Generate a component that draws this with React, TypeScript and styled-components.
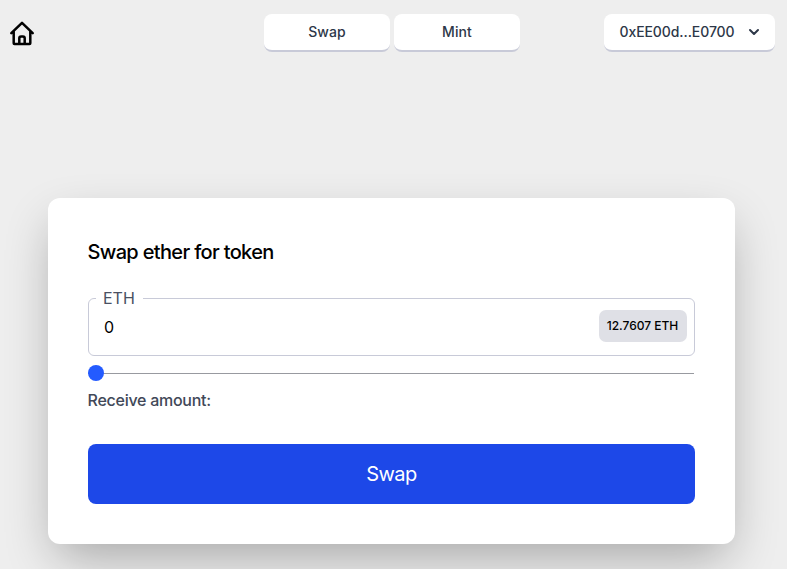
import React, { useState } from "react";
import styled, { createGlobalStyle } from "styled-components";

const GlobalStyle = createGlobalStyle`
  *, *::before, *::after { box-sizing: border-box; }
  body {
    margin: 0;
    min-height: 100vh;
    overflow: hidden;
    background: #eeeeee;
    color: #000;
    font-family: Inter, "Liberation Sans", sans-serif;
  }
  button, input { font: inherit; }
`;

const Header = styled.header`
  display: grid;
  grid-template-columns: 1fr auto 1fr;
  align-items: center;
  height: 66px;
  padding: 0 12px 0 9px;
`;

const HomeLink = styled.a`
  display: flex;
  width: 26px;
  height: 26px;
  color: #000;
`;

const Nav = styled.nav`
  display: flex;
  gap: 4px;
`;

const NavButton = styled.button<{ $width: number; $tracking?: number }>`
  display: flex;
  align-items: center;
  justify-content: center;
  gap: 13px;
  justify-self: end;
  width: ${({ $width }) => $width}px;
  height: 38px;
  padding: 0 0 1px;
  border: 0;
  border-bottom: 2px solid #c8cad8;
  border-radius: 8px;
  background: #fff;
  color: #2d3748;
  font-size: 14px;
  font-weight: 500;
  letter-spacing: ${({ $tracking = 0.1 }) => $tracking}px;
`;

const Card = styled.main`
  width: 687px;
  height: 346px;
  margin: 132px 0 0 48px;
  padding: 40px;
  border-radius: 12px;
  background: #fff;
  box-shadow: 0 20px 50px -8px rgba(0, 0, 0, 0.31);
`;

const Title = styled.h1`
  margin: 0 0 0 -0.5px;
  font-size: 20px;
  line-height: 28px;
  font-weight: 500;
  letter-spacing: -0.66px;
`;

const Field = styled.fieldset`
  display: flex;
  align-items: flex-start;
  height: 68px;
  margin: 22px 0 0;
  padding: 2px 7px 0;
  border: 1px solid #c8cad8;
  border-radius: 6px;
`;

const Legend = styled.legend`
  padding: 0 8px 0 7px;
  color: #4a5163;
  font-size: 16px;
  line-height: 20px;
`;

const AmountInput = styled.input`
  flex: 1;
  min-width: 0;
  height: 34px;
  padding: 0 8px;
  border: 0;
  outline: 0;
  background: transparent;
  font-size: 16px;
`;

const Balance = styled.span`
  width: 88px;
  height: 32px;
  padding-right: 1px;
  border-radius: 7px;
  background: #dfe0e6;
  font-size: 12px;
  line-height: 32px;
  font-weight: 500;
  text-align: center;
`;

const Slider = styled.input`
  display: block;
  appearance: none;
  width: 606px;
  height: 16px;
  margin: 9px 0 0;
  background: linear-gradient(#989aa0, #989aa0) 0 8px / 100% 1px no-repeat;

  &::-webkit-slider-thumb {
    appearance: none;
    width: 16px;
    height: 16px;
    border-radius: 50%;
    background: #245bff;
  }
`;

const Receive = styled.p`
  margin: 7px 0 0 -0.5px;
  color: #414858;
  font-size: 16px;
  line-height: 24px;
  font-weight: 500;
  letter-spacing: -0.26px;
`;

const SubmitButton = styled.button`
  display: block;
  width: 100%;
  height: 60px;
  margin: 32px 0 0;
  border: 0;
  border-radius: 8px;
  background: #1d48e8;
  color: #fff;
  font-size: 20px;
  letter-spacing: -0.5px;
`;

const HomeIcon = () => (
  <svg width="26" height="26" viewBox="0 0 26 26" fill="none" stroke="currentColor" strokeWidth="2.5" strokeLinecap="round" strokeLinejoin="round">
    <path d="M2.3 13.2 13 2.8l10.7 10.4M4.7 11.5v11.7q0 .7.8.7h15q.8 0 .8-.7V11.5" />
    <path d="M10.3 23.5v-5.2q0-1.8 1.8-1.8h1.8q1.8 0 1.8 1.8v5.2" />
  </svg>
);

const Chevron = () => (
  <svg width="12" height="8" viewBox="0 0 12 8" fill="none" stroke="currentColor" strokeWidth="2" strokeLinecap="round" strokeLinejoin="round">
    <path d="m2 2 4 4 4-4" />
  </svg>
);

export default function App() {
  const [amount, setAmount] = useState("0");
  return (
    <>
      <GlobalStyle />
      <Header>
        <HomeLink href="#" aria-label="Home"><HomeIcon /></HomeLink>
        <Nav>
          <NavButton $width={126}>Swap</NavButton>
          <NavButton $width={126}>Mint</NavButton>
        </Nav>
        <NavButton $width={171} $tracking={-0.08}>0xEE00d...E0700<Chevron /></NavButton>
      </Header>
      <Card>
        <Title>Swap ether for token</Title>
        <Field>
          <Legend>ETH</Legend>
          <AmountInput aria-label="ETH amount" value={amount} onChange={(e) => setAmount(e.target.value)} />
          <Balance>12.7607 ETH</Balance>
        </Field>
        <Slider type="range" min="0" max="12.7607" step="0.0001" value={amount} aria-label="Amount" onChange={(e) => setAmount(e.target.value)} />
        <Receive>Receive amount:</Receive>
        <SubmitButton>Swap</SubmitButton>
      </Card>
    </>
  );
}
